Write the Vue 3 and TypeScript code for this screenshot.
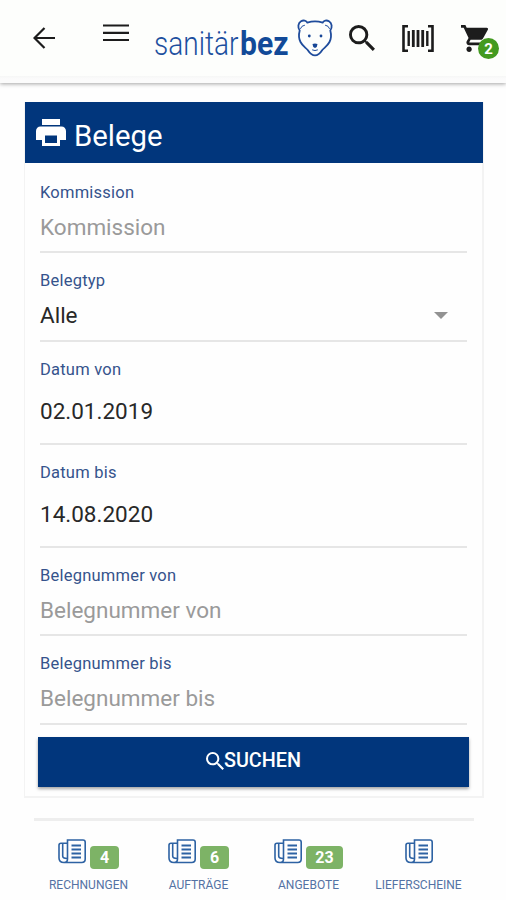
<script setup lang="ts">
interface Field {
  label: string
  value: string
  kind: 'text' | 'select' | 'date'
  filled: boolean
}

interface Tab {
  label: string
  count?: number
}

const fields: Field[] = [
  { label: 'Kommission', value: 'Kommission', kind: 'text', filled: false },
  { label: 'Belegtyp', value: 'Alle', kind: 'select', filled: true },
  { label: 'Datum von', value: '02.01.2019', kind: 'date', filled: true },
  { label: 'Datum bis', value: '14.08.2020', kind: 'date', filled: true },
  { label: 'Belegnummer von', value: 'Belegnummer von', kind: 'text', filled: false },
  { label: 'Belegnummer bis', value: 'Belegnummer bis', kind: 'text', filled: false },
]

const tabs: Tab[] = [
  { label: 'RECHNUNGEN', count: 4 },
  { label: 'AUFTRÄGE', count: 6 },
  { label: 'ANGEBOTE', count: 23 },
  { label: 'LIEFERSCHEINE' },
]
</script>

<template>
  <div class="screen">
    <header class="topbar">
      <svg class="back" viewBox="0 0 22 22" fill="none" stroke="#1c1c1c" stroke-width="2.2">
        <path d="M22 11H2M11.500 1L1.500 11l10 10" />
      </svg>
      <svg class="menu" viewBox="0 0 26 18" fill="none" stroke="#1c1c1c" stroke-width="2.2">
        <path d="M0 1.500h26M0 8.800h26M0 16h26" />
      </svg>
      <svg class="logo" viewBox="0 0 178 44">
        <text class="logo-light" x="-1" y="36.500" textLength="84.500" lengthAdjust="spacingAndGlyphs">sanitär</text>
        <text class="logo-bold" x="85" y="36.500" textLength="48.500" lengthAdjust="spacingAndGlyphs">bez</text>
        <g fill="none" stroke="#1f4c9c" stroke-width="1.800" stroke-linejoin="round" stroke-linecap="round">
          <path d="M144.700 12.500C142.500 9.500 143 5 146 3.200C148.500 1.800 151.300 2.600 152.300 4.700C157 3.200 163 3.200 167.700 4.700C168.700 2.600 171.500 1.800 174 3.200C177 5 177.500 9.500 175.300 12.500C176.500 17 176.300 20.500 174.500 24C172.800 27.500 169.500 29.500 167.300 32C164.800 36 162.500 37.400 160 37.400C157.500 37.400 155.200 36 152.700 32C150.500 29.500 147.200 27.500 145.500 24C143.700 20.500 143.500 17 144.700 12.500Z" />
          <path d="M145.500 10.500q1-3 4-3.300M174.500 10.500q-1-3-4-3.300M157.500 32q2.500 1.300 5 0" stroke-width="1" />
        </g>
        <g fill="#174696">
          <circle cx="154.300" cy="18" r="1.400" />
          <circle cx="166" cy="18" r="1.400" />
          <path d="M157.500 26q2.500-1.200 5 0q0 3-2.500 4q-2.500-1-2.500-4z" />
        </g>
      </svg>
      <svg class="search" viewBox="3 3 17.500 17.500" fill="#1c1c1c">
        <path d="M15.500 14h-.79l-.28-.27A6.471 6.471 0 0 0 16 9.500 6.500 6.500 0 1 0 9.500 16c1.610 0 3.090-.59 4.230-1.570l.27.28v.79l5 4.990L20.490 19l-4.990-5zm-6 0C7.010 14 5 11.990 5 9.500S7.010 5 9.500 5 14 7.010 14 9.500 11.990 14 9.500 14z" />
      </svg>
      <svg class="barcode" viewBox="0 0 32 27" fill="none" stroke="#1c1c1c">
        <path d="M6 1.300H1.500v24.400H6M26 1.300h4.500v24.400H26" stroke-width="2.600" />
        <path d="M6.700 6v15M25.300 6v15" stroke-width="2.400" />
        <path d="M11.300 5v17M16 5v17M20.700 5v17" stroke-width="2.800" />
      </svg>
      <div class="cart">
        <svg viewBox="1 2 20 20" fill="#1c1c1c">
          <path d="M7 18c-1.100 0-1.990.9-1.990 2S5.900 22 7 22s2-.9 2-2-.9-2-2-2zM1 2v2h2l3.600 7.590-1.350 2.450c-.16.280-.25.610-.25.960 0 1.100.9 2 2 2h12v-2H7.420c-.14 0-.25-.11-.25-.25l.03-.12.900-1.630h7.450c.75 0 1.410-.41 1.750-1.030l3.580-6.490A1 1 0 0 0 20 4H5.210l-.94-2H1zm16 16c-1.100 0-1.990.9-1.990 2s.89 2 1.990 2 2-.9 2-2-.9-2-2-2z" />
        </svg>
        <span class="cart-count">2</span>
      </div>
    </header>

    <main class="card">
      <h1 class="card-title">
        <svg viewBox="2 3 20 18" fill="#fff">
          <path d="M19 8H5c-1.660 0-3 1.340-3 3v6h4v4h12v-4h4v-6c0-1.660-1.340-3-3-3zm-3 11H8v-5h8v5zM18 3H6v4h12V3z" />
        </svg>
        <span>Belege</span>
      </h1>
      <div class="fields">
        <div v-for="field in fields" :key="field.label" class="field" :class="field.kind">
          <label>{{ field.label }}</label>
          <div class="value" :class="{ filled: field.filled }">
            <span>{{ field.value }}</span>
            <i v-if="field.kind === 'select'" class="caret"></i>
          </div>
        </div>
      </div>
      <button class="submit" type="button">
        <svg viewBox="3 3 17.500 17.500" fill="#fff">
          <path d="M15.500 14h-.79l-.28-.27A6.471 6.471 0 0 0 16 9.500 6.500 6.500 0 1 0 9.500 16c1.610 0 3.090-.59 4.230-1.570l.27.28v.79l5 4.990L20.490 19l-4.990-5zm-6 0C7.010 14 5 11.990 5 9.500S7.010 5 9.500 5 14 7.010 14 9.500 11.990 14 9.500 14z" />
        </svg>
        <span>SUCHEN</span>
      </button>
    </main>

    <nav class="tabs">
      <div v-for="tab in tabs" :key="tab.label" class="tab">
        <div class="tab-top">
          <svg viewBox="0 0 28 25" fill="none" stroke="#2d62a3" stroke-width="1.600">
            <path d="M9.500 1H25q2.200 0 2.200 2.200V20q0 3.500-3.500 3.500H6q3.500 0 3.500-3.500z" />
            <path d="M9.500 4.200H3Q1 4.200 1 6.200V19q0 4.500 5 4.500M4.700 4.500V17q0 2.500 4.500 2.500" />
            <path d="M13.500 6.500h9.500M13.500 10.500h9.500M13.500 14.500h9.500M13.500 18.500h9.500" stroke-width="1.900" />
          </svg>
          <span v-if="tab.count" class="count">{{ tab.count }}</span>
        </div>
        <span class="tab-label">{{ tab.label }}</span>
      </div>
    </nav>
  </div>
</template>

<style>
body {
  background: #fefefe;
}
</style>

<style scoped>
.screen {
  box-sizing: border-box;
  height: 900px;
  overflow: hidden;
  font-family: Roboto, 'Liberation Sans', sans-serif;
  color: #1f1f1f;
}

svg {
  display: block;
  flex: none;
}

.topbar {
  box-sizing: border-box;
  display: flex;
  align-items: flex-start;
  height: 83px;
  padding-left: 33px;
  background: linear-gradient(#fdfefc 76px, #f6f7f6 76px, #fbfbfb 79px);
  box-shadow: 0 1px 4px rgba(0, 0, 0, 0.36);
}

.back {
  width: 22px;
  height: 22px;
  margin-top: 27px;
}

.menu {
  width: 26px;
  height: 18px;
  margin: 24px 0 0 48px;
}

.logo {
  width: 178px;
  height: 44px;
  margin: 18px 0 0 26px;
  overflow: visible;
}

.logo-light,
.logo-bold {
  font-family: Roboto, 'Liberation Sans', sans-serif;
  font-size: 33px;
  fill: #1d509f;
}

.logo-light {
  font-weight: 300;
}

.logo-bold {
  font-weight: 700;
  fill: #124a98;
}

.search {
  width: 26px;
  height: 26px;
  margin: 25px 0 0 16px;
}

.barcode {
  width: 32px;
  height: 27px;
  margin: 25px 0 0 27px;
}

.cart {
  position: relative;
  margin: 25px 0 0 27px;
}

.cart svg {
  width: 27px;
  height: 27px;
}

.cart-count {
  position: absolute;
  left: 17px;
  top: 13px;
  width: 21px;
  height: 21px;
  border-radius: 50%;
  background: #439a20;
  color: #fff;
  font-size: 15px;
  font-weight: 700;
  line-height: 22px;
  text-align: center;
}

.card {
  box-sizing: border-box;
  width: 460px;
  height: 696px;
  margin: 19px 0 0 24px;
  border: 1px solid #f3f3f3;
  border-width: 0 2px 2px 1px;
}

.card-title {
  display: flex;
  align-items: center;
  height: 61px;
  margin: 0 -1px 0 0;
  padding-left: 11px;
  background: #01367c;
  color: #fff;
  font-size: 29.300px;
  font-weight: 400;
}

.card-title svg {
  width: 30px;
  height: 27px;
}

.card-title span {
  margin: 7px 0 0 8px;
  line-height: 36px;
}

.fields {
  padding: 0 15px;
}

.field {
  box-sizing: border-box;
  height: 88.500px;
  padding-top: 18px;
  border-bottom: 2px solid #e6e6e6;
}

.field:first-child {
  height: 90px;
  padding-top: 20px;
}

.field.date {
  height: 103px;
}

.field label {
  display: block;
  font-size: 16.500px;
  line-height: 20px;
  letter-spacing: 0.220px;
  color: #35538c;
}

.value {
  display: flex;
  align-items: center;
  justify-content: space-between;
  margin-top: 11px;
  font-size: 22.500px;
  line-height: 26px;
  color: #9a9a9a;
}

.value.filled {
  color: #282828;
}

.date .value {
  margin-top: 18px;
}

.caret {
  margin-right: 19px;
  border: 7px solid transparent;
  border-top-color: #929292;
  border-bottom: 0;
}

.submit {
  display: flex;
  align-items: center;
  justify-content: center;
  width: 431px;
  height: 50px;
  margin: 12px 0 0 13px;
  padding: 0 0 2px;
  border: 0;
  background: #01367c;
  box-shadow: 0 2px 3px rgba(0, 0, 0, 0.35);
  color: #fff;
  font-family: inherit;
  font-size: 19.800px;
  font-weight: 500;
}

.submit svg {
  width: 18px;
  height: 18px;
}

.tabs {
  display: grid;
  grid-template-columns: repeat(4, 110px);
  width: 440px;
  margin: 20px 0 0 33.500px;
  border-top: 3px solid #eee;
}

.tab {
  display: flex;
  flex-direction: column;
  align-items: center;
}

.tab-top {
  display: flex;
  height: 50px;
  padding-top: 18px;
  box-sizing: border-box;
}

.tab-top svg {
  width: 28px;
  height: 25px;
}

.count {
  box-sizing: border-box;
  min-width: 28px;
  height: 23px;
  margin: 7px 0 0 4px;
  padding: 0 9.500px;
  border-radius: 4px;
  background: #7db366;
  color: #fff;
  font-size: 16px;
  font-weight: 700;
  line-height: 23px;
  text-align: center;
}

.tab-label {
  margin-top: 6px;
  font-size: 12px;
  line-height: 16px;
  color: #5472a4;
}
</style>
